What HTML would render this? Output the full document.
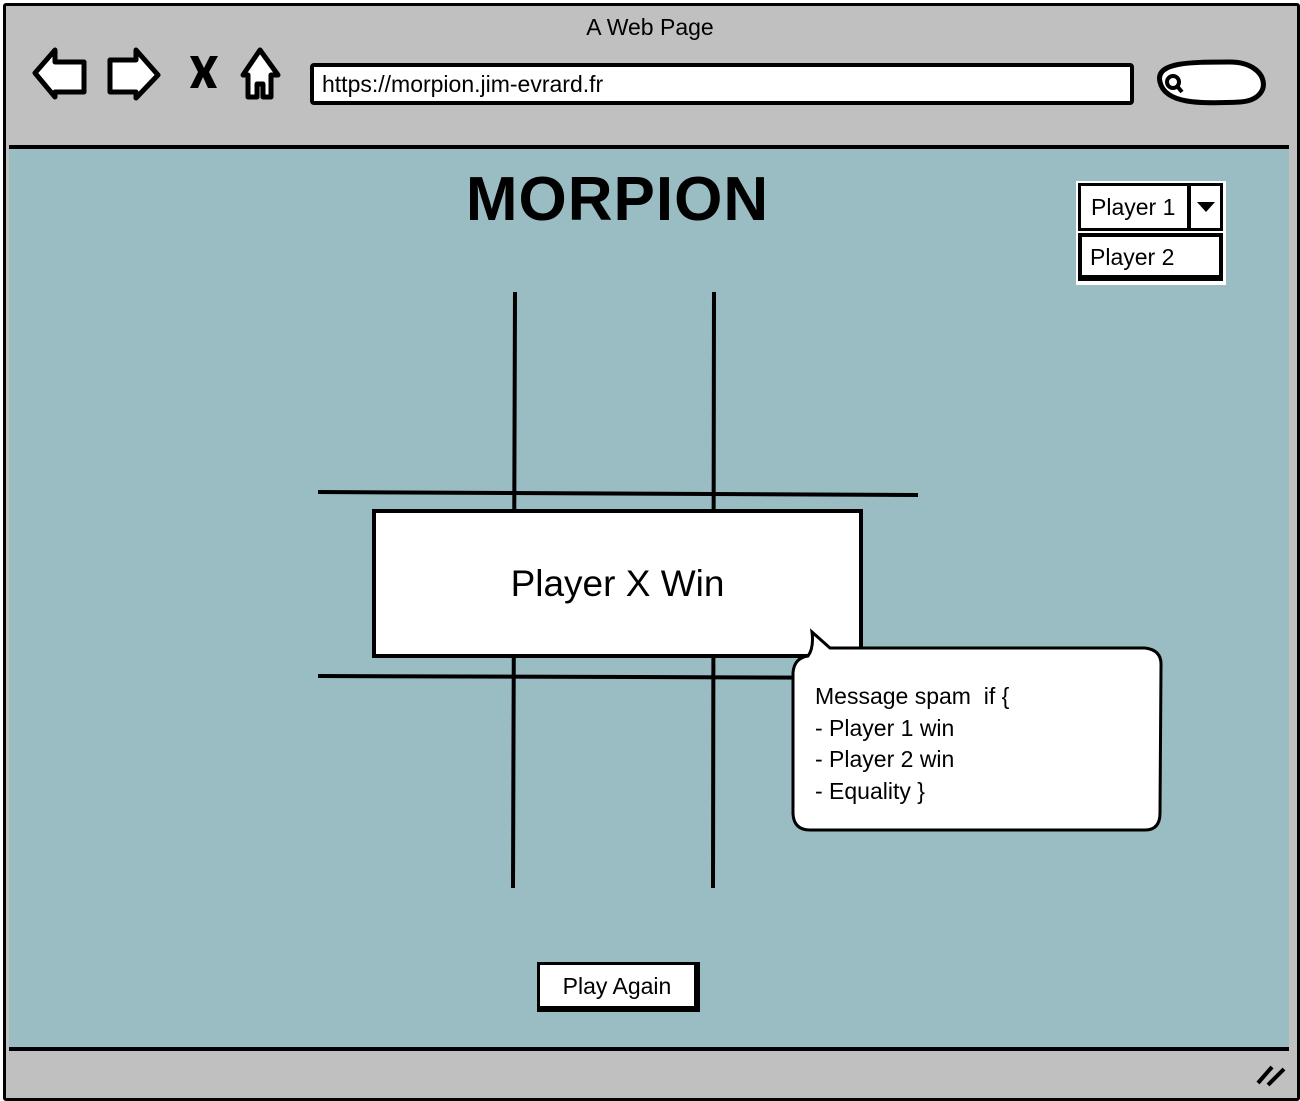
<!DOCTYPE html>
<html><head><style>
body{margin:0;width:1300px;height:1100px;position:relative;background:#fff;font-family:"Liberation Sans",sans-serif;overflow:hidden}
.a{position:absolute}
</style></head><body>
<div class="a" style="left:3px;top:3px;width:1291px;height:1092px;border:3px solid #000;background:#c0c0c0;border-radius:3px"></div>
<div class="a" style="left:9px;top:145px;width:1280px;height:898px;background:#9abcc3;border-top:4px solid #000;border-bottom:4px solid #000"></div>
<div class="a" style="left:0;top:14px;width:1300px;text-align:center;font-size:23px">A Web Page</div>
<svg class="a" style="left:0;top:0" width="1300" height="1100">
<g stroke="#000" stroke-width="5" fill="#fff" stroke-linejoin="round">
<path d="M35 73 L55 50 L55 62 L84 62 L84 92 L55 92 L55 97 Z"/>
<path d="M158 75 L136 50 L136 60 L110 60 L110 92 L136 92 L136 98 Z"/>
<path d="M243 75 L260 50 L278 75 L271 75 L271 97 L263 97 L263 84 L257 84 L257 97 L248 97 L248 75 Z"/>
<path d="M1160 82 C1155 62 1190 62 1230 62 C1270 62 1275 100 1240 102 C1200 104 1165 104 1160 82 Z"/>
</g>
<path d="M190 56 L198 56 L204 68 L210 56 L218 56 L209 72 L217 88 L208 88 L203 77 L198 88 L190 88 L198 72 Z" fill="#000"/>
<circle cx="1173" cy="82" r="6" fill="none" stroke="#000" stroke-width="4"/>
<line x1="1177" y1="86" x2="1182" y2="92" stroke="#000" stroke-width="4"/>
<path d="M1258 1083 L1272 1067 M1268 1085 L1284 1069" stroke="#000" stroke-width="4"/>
<g stroke="#000" stroke-width="4" fill="none">
<path d="M515 292 L513 888"/><path d="M714 292 L713 888"/>
<path d="M318 492 L918 495"/><path d="M318 676 L918 678"/>
</g>
</svg>
<div class="a" style="left:310px;top:63px;width:808px;height:34px;background:#fff;border:4px solid #000;border-radius:4px;font-size:23px;line-height:34px;padding-left:8px;box-sizing:content-box">https://morpion.jim-evrard.fr</div>
<div class="a" style="left:0;top:164px;width:1235px;text-align:center;font-size:62px;font-weight:bold;letter-spacing:1px">MORPION</div>
<div class="a" style="left:1076px;top:181px;width:150px;height:104px;background:#fff"></div>
<div class="a" style="left:1078px;top:183px;height:48px;border:3px solid #000;font-size:23px;line-height:42px;padding-left:10px;box-sizing:border-box;width:112px">Player 1</div>
<div class="a" style="left:1188px;top:183px;width:35px;height:48px;border:3px solid #000;box-sizing:border-box"></div>
<div class="a" style="left:1197px;top:202px;border-left:9px solid transparent;border-right:9px solid transparent;border-top:10px solid #000"></div>
<div class="a" style="left:1078px;top:233px;width:145px;height:48px;border:4px solid #000;border-bottom-width:6px;box-sizing:border-box;font-size:23px;line-height:40px;padding-left:8px">Player 2</div>
<div class="a" style="left:372px;top:509px;width:491px;height:149px;background:#fff;border:4px solid #000;box-sizing:border-box;font-size:37px;text-align:center;line-height:141px">Player X Win</div>
<svg class="a" style="left:790px;top:628px" width="380" height="210"><path d="M22 4 L40 20 L355 20 Q372 22 371 38 L370 185 Q370 202 355 202 L20 202 Q4 202 3 186 L3 45 Q4 30 18 28 Q24 20 22 4 Z" fill="#fff" stroke="#000" stroke-width="3"/></svg>
<div class="a" style="left:815px;top:681px;font-size:23px;line-height:31.5px">Message spam&nbsp; if {<br>- Player 1 win<br>- Player 2 win<br>- Equality }</div>
<div class="a" style="left:537px;top:962px;width:163px;height:50px;background:#fff;border:3px solid #000;border-right-width:6px;border-bottom-width:6px;box-sizing:border-box;font-size:23px;text-align:center;line-height:42px">Play Again</div>
</body></html>
